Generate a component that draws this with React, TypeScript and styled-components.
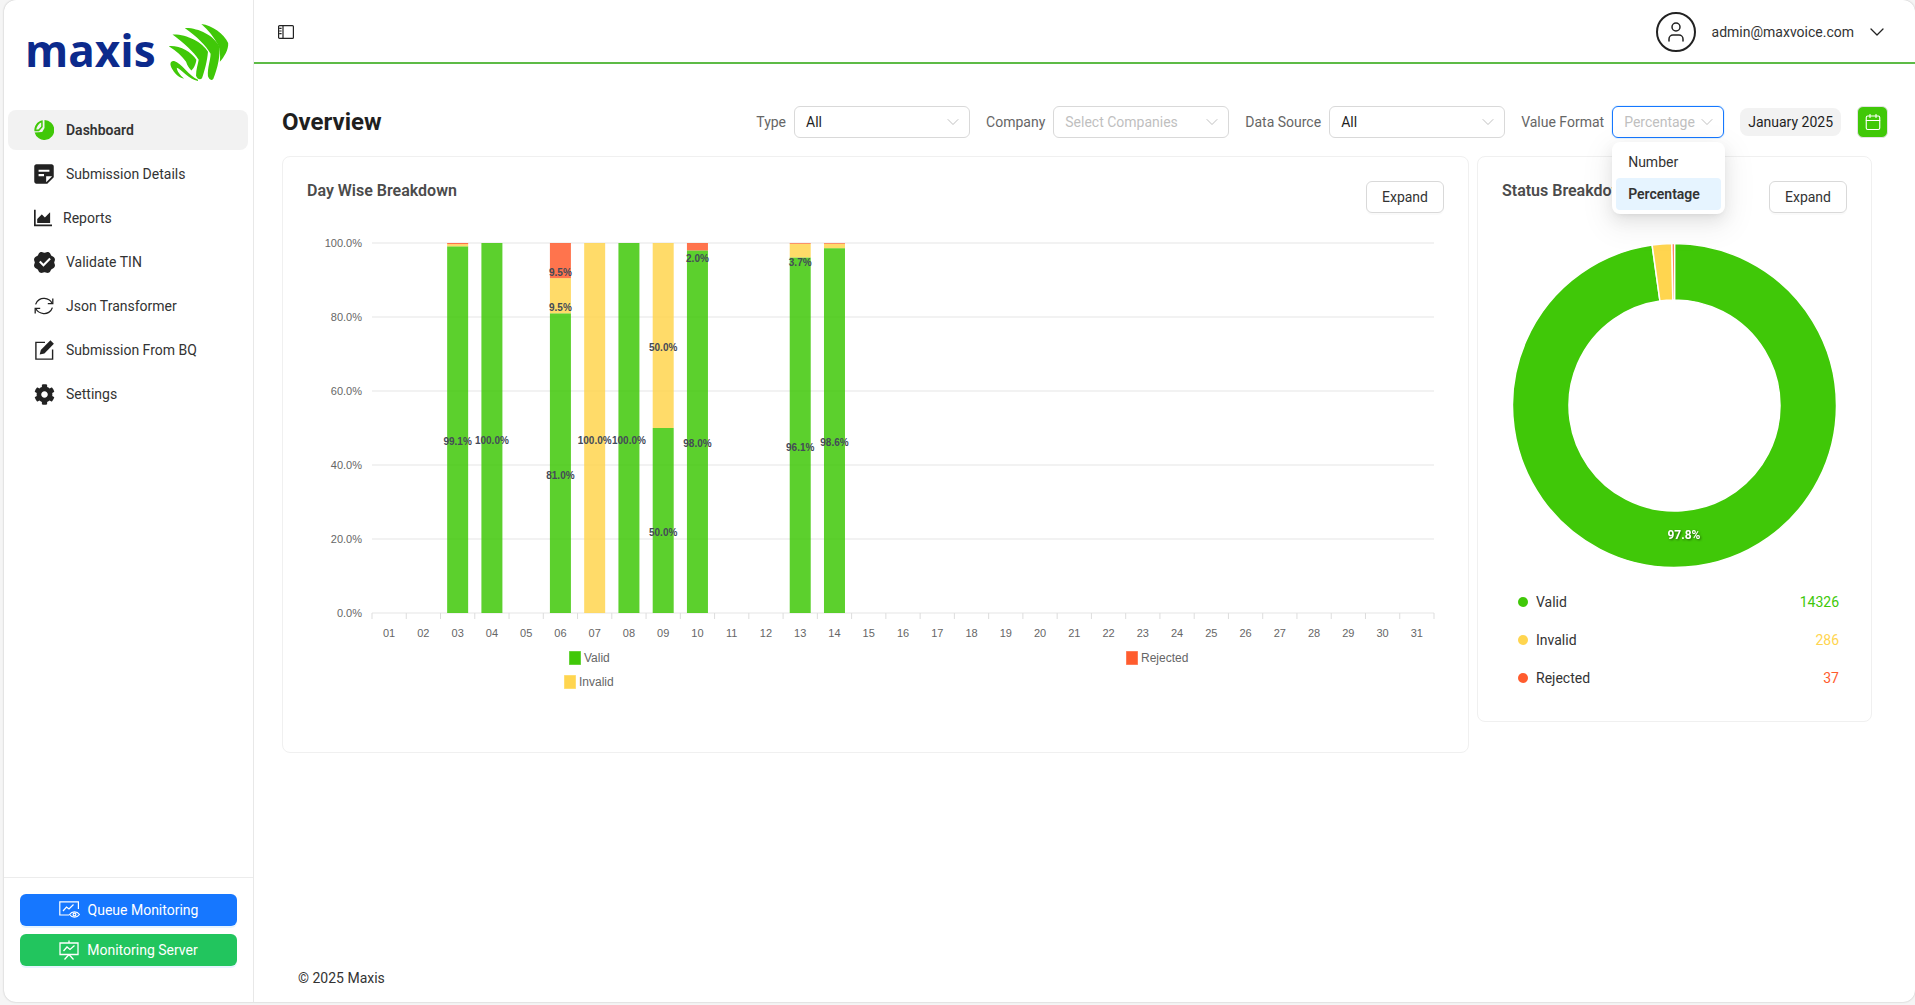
import { ReactNode } from "react";
import styled, { createGlobalStyle } from "styled-components";
import { Calendar, ChevronDown, User } from "lucide-react";
import { AiOutlineAreaChart } from "react-icons/ai";
import { FaCog } from "react-icons/fa";
import { MdStickyNote2 } from "react-icons/md";
import { RiVerifiedBadgeFill } from "react-icons/ri";

const GREEN = "#40c808";
const YELLOW = "#ffd54f";
const RED = "#ff5c2e";

const GlobalStyle = createGlobalStyle`
  html, body {
    margin: 0;
    height: 100%;
    background: #f5f5f5;
    font-family: Roboto, "Liberation Sans", sans-serif;
    font-size: 14px;
    overflow: hidden;
  }
  * {
    box-sizing: border-box;
  }
`;

const Shell = styled.div`
  display: flex;
  height: 1002px;
  margin-left: 4px;
  background: #fff;
  border-radius: 12px;
  box-shadow: 0 0 2px rgba(0, 0, 0, 0.25);
  overflow: hidden;
`;

const Sidebar = styled.aside`
  width: 250px;
  flex-shrink: 0;
  display: flex;
  flex-direction: column;
  border-right: 1px solid #e8e8e8;
`;

const LogoRow = styled.div`
  height: 110px;
  display: flex;
  align-items: flex-start;
  padding: 23px 0 0 21px;
`;

const LogoText = styled.span`
  width: 143px;
  font-family: "Open Sans", sans-serif;
  font-size: 44px;
  line-height: 54px;
  font-weight: 700;
  color: #0c2a8c;
`;

const Nav = styled.nav`
  flex: 1;
  display: flex;
  flex-direction: column;
  gap: 4px;
  padding: 0 5px 0 4px;
`;

const NavItem = styled.div<{ $active?: boolean }>`
  height: 40px;
  display: flex;
  align-items: center;
  gap: 12px;
  padding-left: 26px;
  border-radius: 8px;
  color: #333;
  font-weight: ${({ $active }) => ($active ? 600 : 400)};
  background: ${({ $active }) => ($active ? "#f2f2f2" : "transparent")};
`;

const NavIcon = styled.span<{ $shift?: number }>`
  width: 20px;
  height: 20px;
  display: flex;
  align-items: center;
  justify-content: center;
  margin-left: ${({ $shift = 0 }) => -$shift / 2}px;
  color: #222;

  svg {
    flex-shrink: 0;
  }
`;

const NavLabel = styled.span<{ $shift?: number }>`
  margin-left: ${({ $shift = 0 }) => -$shift / 2}px;
`;

const SideFooter = styled.div`
  display: flex;
  flex-direction: column;
  gap: 8px;
  padding: 16px 16px 36px;
  border-top: 1px solid #ececec;
`;

const SideButton = styled.button<{ $color: string; $glow: string }>`
  height: 32px;
  display: flex;
  align-items: center;
  justify-content: center;
  gap: 8px;
  border: 0;
  border-radius: 6px;
  color: #fff;
  font: inherit;
  background: ${({ $color }) => $color};
  box-shadow: 0 2px 0 ${({ $glow }) => $glow};
`;

const Main = styled.main`
  flex: 1;
  min-width: 0;
  display: flex;
  flex-direction: column;
`;

const Header = styled.header`
  height: 64px;
  flex-shrink: 0;
  display: flex;
  align-items: center;
  justify-content: space-between;
  padding: 2px 26px 0 23px;
  border-bottom: 2px solid #5dbb46;
`;

const UserBox = styled.div`
  display: flex;
  align-items: center;
  color: #333;
`;

const Avatar = styled.span`
  width: 40px;
  height: 40px;
  display: flex;
  align-items: center;
  justify-content: center;
  margin-right: 16px;
  border: 2px solid #222;
  border-radius: 50%;
`;

const Email = styled.span`
  margin-right: 11px;
`;

const Content = styled.div`
  flex: 1;
  display: flex;
  flex-direction: column;
  padding: 42px 27px 0 28px;
`;

const TitleRow = styled.div`
  display: flex;
  align-items: center;
  justify-content: space-between;
  margin-bottom: 18px;
`;

const PageTitle = styled.h1`
  margin: 0;
  font-size: 24px;
  font-weight: 700;
  color: #1f1f1f;
`;

const Filters = styled.div`
  display: flex;
  align-items: center;
  gap: 16px;
`;

const Filter = styled.label`
  display: flex;
  align-items: center;
  gap: 8px;
  color: #666;
`;

const SelectWrap = styled.div`
  position: relative;
`;

const SelectBox = styled.div<{ $width: number; $focused?: boolean; $muted?: boolean }>`
  width: ${({ $width }) => $width}px;
  height: 32px;
  display: flex;
  align-items: center;
  justify-content: space-between;
  padding: 0 6px 0 11px;
  border: 1px solid ${({ $focused }) => ($focused ? "#1677ff" : "#d9d9d9")};
  border-radius: 6px;
  color: ${({ $muted }) => ($muted ? "#bfbfbf" : "#1f1f1f")};
  background: #fff;
  box-shadow: ${({ $focused }) => ($focused ? "0 0 0 1px rgba(5, 145, 255, 0.1)" : "none")};
`;

const Menu = styled.div`
  position: absolute;
  z-index: 5;
  top: 36px;
  left: 0;
  width: 113px;
  padding: 4px;
  border-radius: 8px;
  background: #fff;
  box-shadow: 0 6px 16px rgba(0, 0, 0, 0.08), 0 3px 6px -4px rgba(0, 0, 0, 0.12),
    0 9px 28px 8px rgba(0, 0, 0, 0.05);
`;

const MenuItem = styled.div<{ $selected?: boolean }>`
  height: 32px;
  display: flex;
  align-items: center;
  padding: 0 8px 0 12px;
  border-radius: 4px;
  color: #333;
  font-weight: ${({ $selected }) => ($selected ? 600 : 400)};
  background: ${({ $selected }) => ($selected ? "#e6f4ff" : "transparent")};
`;

const MonthPill = styled.div`
  height: 28px;
  display: flex;
  align-items: center;
  padding: 0 8px;
  border-radius: 8px;
  color: #1f1f1f;
  background: #f2f2f2;
`;

const CalendarButton = styled.button`
  width: 31px;
  height: 32px;
  display: flex;
  align-items: center;
  justify-content: center;
  padding: 0;
  border: 1px solid #e3e3e3;
  border-radius: 6px;
  color: #fff;
  background: ${GREEN};
`;

const Cards = styled.div`
  display: flex;
  align-items: flex-start;
  gap: 8px;
`;

const Card = styled.section<{ $width: number }>`
  width: ${({ $width }) => $width}px;
  flex-shrink: 0;
  padding: 24px;
  border: 1px solid #f0f0f0;
  border-radius: 8px;
  background: #fff;
`;

const CardHead = styled.div`
  height: 32px;
  display: flex;
  align-items: flex-start;
  justify-content: space-between;
`;

const CardTitle = styled.h2`
  margin: 0;
  font-size: 16px;
  line-height: 20px;
  font-weight: 600;
  color: #4b4b4b;
`;

const ExpandButton = styled.button`
  width: 78px;
  height: 32px;
  padding: 0;
  border: 1px solid #d9d9d9;
  border-radius: 6px;
  color: #333;
  font: inherit;
  background: #fff;
  box-shadow: 0 2px 0 rgba(0, 0, 0, 0.02);
`;

const BarChart = styled.svg`
  display: block;
  margin-top: 12px;
`;

const Donut = styled.svg`
  display: block;
  margin: 27px 0 13px;
`;

const AxisText = styled.text`
  font-family: "Liberation Sans", sans-serif;
  font-size: 11px;
  fill: #666;
`;

const LegendText = styled.text`
  font-family: "Liberation Sans", sans-serif;
  font-size: 12px;
  fill: #666;
`;

const BarLabel = styled.text`
  font-family: "Liberation Sans", sans-serif;
  font-size: 10px;
  font-weight: 700;
  fill: #444a58;
  text-anchor: middle;
  dominant-baseline: central;
`;

const SliceLabel = styled.text`
  font-size: 12px;
  font-weight: 700;
  fill: #fff;
  text-anchor: middle;
  dominant-baseline: central;
  filter: drop-shadow(1px 1px 1px rgba(0, 0, 0, 0.5));
`;

const StatusRow = styled.div`
  height: 38px;
  display: flex;
  align-items: center;
  padding: 0 8px 0 16px;
  color: #333;
`;

const StatusDot = styled.span<{ $color: string }>`
  width: 10px;
  height: 10px;
  margin-right: 8px;
  border-radius: 50%;
  background: ${({ $color }) => $color};
`;

const StatusValue = styled.span<{ $color: string }>`
  margin-left: auto;
  color: ${({ $color }) => $color};
`;

const Footer = styled.footer`
  margin-top: auto;
  padding: 0 16px 16px;
  color: #333;
`;

// bottom of the plot is 613, top 243
const PLOT_LEFT = 372;
const PLOT_RIGHT = 1434;
const PLOT_TOP = 243;
const PLOT_BOTTOM = 613;
const STEP = (PLOT_RIGHT - PLOT_LEFT) / 31;
const BAR_WIDTH = 21;

type Day = {
  day: number;
  valid: number;
  invalid: number;
  rejected: number;
  labels: { text: string; y: number }[];
};

const days: Day[] = [
  { day: 3, valid: 99.1, invalid: 0.6, rejected: 0.3, labels: [{ text: "99.1%", y: 441 }] },
  { day: 4, valid: 100, invalid: 0, rejected: 0, labels: [{ text: "100.0%", y: 440 }] },
  {
    day: 6,
    valid: 81,
    invalid: 9.5,
    rejected: 9.5,
    labels: [
      { text: "81.0%", y: 475 },
      { text: "9.5%", y: 307 },
      { text: "9.5%", y: 272 },
    ],
  },
  { day: 7, valid: 0, invalid: 100, rejected: 0, labels: [{ text: "100.0%", y: 440 }] },
  { day: 8, valid: 100, invalid: 0, rejected: 0, labels: [{ text: "100.0%", y: 440 }] },
  {
    day: 9,
    valid: 50,
    invalid: 50,
    rejected: 0,
    labels: [
      { text: "50.0%", y: 532 },
      { text: "50.0%", y: 347 },
    ],
  },
  {
    day: 10,
    valid: 98,
    invalid: 0,
    rejected: 2,
    labels: [
      { text: "98.0%", y: 443 },
      { text: "2.0%", y: 258 },
    ],
  },
  {
    day: 13,
    valid: 96.1,
    invalid: 3.7,
    rejected: 0.2,
    labels: [
      { text: "96.1%", y: 447 },
      { text: "3.7%", y: 262 },
    ],
  },
  { day: 14, valid: 98.6, invalid: 1.2, rejected: 0.2, labels: [{ text: "98.6%", y: 442 }] },
];

const yTicks = [0, 20, 40, 60, 80, 100];

const toY = (pct: number) => PLOT_BOTTOM - (pct / 100) * (PLOT_BOTTOM - PLOT_TOP);

function Segment({ x, from, size, color }: { x: number; from: number; size: number; color: string }) {
  if (!size) return null;
  return (
    <rect
      x={x}
      y={toY(from + size)}
      width={BAR_WIDTH}
      height={toY(from) - toY(from + size)}
      fill={color}
      fillOpacity={0.85}
    />
  );
}

function LegendItem({ x, y, color, label }: { x: number; y: number; color: string; label: string }) {
  return (
    <>
      <rect x={x + 0.5} y={y - 5.5} width={11} height={13} fill={color} stroke={color} strokeOpacity={0.6} />
      <LegendText x={x + 15} y={y + 5}>
        {label}
      </LegendText>
    </>
  );
}

function DayChart() {
  return (
    <BarChart width={1137} height={503} viewBox="307 225 1137 503">
      {yTicks.map((tick) => (
        <g key={tick}>
          <line x1={PLOT_LEFT} x2={PLOT_RIGHT} y1={toY(tick)} y2={toY(tick)} stroke="#eeeeee" strokeWidth={1.6} />
          <AxisText x={362} y={toY(tick) + 4} textAnchor="end">
            {tick}.0%
          </AxisText>
        </g>
      ))}
      {Array.from({ length: 32 }, (_, i) => (
        <line
          key={i}
          x1={PLOT_LEFT + i * STEP}
          x2={PLOT_LEFT + i * STEP}
          y1={PLOT_BOTTOM}
          y2={PLOT_BOTTOM + 6}
          stroke="#dddddd"
        />
      ))}
      {Array.from({ length: 31 }, (_, i) => (
        <AxisText key={i} x={PLOT_LEFT + (i + 0.5) * STEP} y={637} textAnchor="middle">
          {String(i + 1).padStart(2, "0")}
        </AxisText>
      ))}
      {days.map(({ day, valid, invalid, rejected }) => {
        const x = PLOT_LEFT + (day - 0.5) * STEP - BAR_WIDTH / 2;
        return (
          <g key={day}>
            <Segment x={x} from={0} size={valid} color={GREEN} />
            <Segment x={x} from={valid} size={invalid} color={YELLOW} />
            <Segment x={x} from={valid + invalid} size={rejected} color={RED} />
          </g>
        );
      })}
      {days.map(({ day, labels }) =>
        labels.map(({ text, y }) => (
          <BarLabel key={`${day}-${y}`} x={PLOT_LEFT + (day - 0.5) * STEP} y={y}>
            {text}
          </BarLabel>
        )),
      )}
      <LegendItem x={569} y={657} color={GREEN} label="Valid" />
      <LegendItem x={564} y={681} color={YELLOW} label="Invalid" />
      <LegendItem x={1126} y={657} color={RED} label="Rejected" />
    </BarChart>
  );
}

const CX = 1674.5;
const CY = 405.5;
const OUTER = 162;
const INNER = 105.5;

function polar(r: number, deg: number) {
  const a = ((deg - 90) * Math.PI) / 180;
  return `${CX + r * Math.cos(a)} ${CY + r * Math.sin(a)}`;
}

function slicePath(start: number, end: number) {
  const large = end - start > 180 ? 1 : 0;
  return [
    `M${polar(OUTER, start)}`,
    `A${OUTER} ${OUTER} 0 ${large} 1 ${polar(OUTER, end)}`,
    `L${polar(INNER, end)}`,
    `A${INNER} ${INNER} 0 ${large} 0 ${polar(INNER, start)}`,
    "Z",
  ].join(" ");
}

const statuses = [
  { label: "Valid", value: 14326, color: GREEN },
  { label: "Invalid", value: 286, color: YELLOW },
  { label: "Rejected", value: 37, color: RED },
];

function StatusDonut() {
  const total = statuses.reduce((sum, s) => sum + s.value, 0);
  let angle = 0;
  return (
    <Donut width={345} height={330} viewBox="1502 240 345 330">
      {statuses.map(({ label, value, color }) => {
        const start = angle;
        angle += (value / total) * 360;
        return <path key={label} d={slicePath(start, angle)} fill={color} stroke="#fff" strokeWidth={1.5} />;
      })}
      <SliceLabel x={1684} y={534.5}>
        97.8%
      </SliceLabel>
    </Donut>
  );
}

function Swoosh() {
  return (
    <svg width={61} height={58} viewBox="22 15 183 175" fill="#40c808">
      <path d="M122 18 C155 22 190 48 203 75 C205 95 190 118 178 132 C180 110 178 92 172 80 C160 58 145 38 122 18 Z" />
      <path d="M72 30 C110 28 160 52 176 85 C180 110 172 150 158 184 C152 190 146 186 142 176 C140 150 150 128 150 108 C138 85 108 55 72 30 Z" />
      <path d="M35 50 C75 48 125 72 142 102 C140 130 132 160 124 182 C118 188 110 184 106 174 C106 155 112 140 114 126 C100 104 70 75 35 50 Z" />
      <path d="M24 85 C55 82 92 102 107 126 C106 138 100 152 92 158 C84 150 80 144 76 132 C64 115 48 100 24 85 Z" />
      <path d="M112 186 C85 176 62 136 40 130 C28 128 25 140 35 155 C45 172 58 180 70 183 C58 172 48 160 48 150 C60 152 85 186 112 190 Z" />
    </svg>
  );
}

function PieLeaf() {
  return (
    <svg width={20} height={20} viewBox="0 0 20 20">
      <path fill="#40c808" d="M10.5 0 A10 10 0 1 1 0.6 12.5 L8.2 12 L10.5 8 Z" />
      <path
        fill="#40c808"
        fillRule="evenodd"
        d="M8.7 0.3 L8.7 7 L5 11.2 L0.4 11.2 C0 6 3 1.5 8.7 0.3 Z M7.2 2.4 C4.8 3.6 2.8 6 2.2 9.6 L4.4 9.6 L7.2 6.4 Z"
      />
    </svg>
  );
}

function SyncArrows() {
  return (
    <svg width={20} height={20} viewBox="0 0 20 20" fill="none" stroke="currentColor" strokeWidth={1.3}>
      <path d="M1.6 8.4 C3 4 7 2 10.5 2.4 C14 2.8 16.5 4.4 18 7" />
      <path d="M18.8 2.4 V7.6 H13.8" />
      <path d="M18.4 11.6 C17 16 13 18 9.5 17.6 C6 17.2 3.5 15.6 2 13" />
      <path d="M1.2 17.6 V12.4 H6.2" />
    </svg>
  );
}

function EditSquare() {
  return (
    <svg width={20} height={20} viewBox="0 0 20 20">
      <path d="M11 2.4 H1.9 V19.1 H18.6 V9.4" fill="none" stroke="currentColor" strokeWidth={1.4} />
      <path fill="currentColor" d="M16.4 0.2 L19.9 3.7 L10.4 13.4 L5.7 14.5 L6.8 9.9 Z" />
    </svg>
  );
}

function PanelIcon() {
  return (
    <svg width={18} height={16} viewBox="0 0 18 16" fill="none" stroke="#222" strokeWidth={1.2}>
      <rect x={1.6} y={1.6} width={14.8} height={12.8} rx={1} />
      <path d="M6 1.6 V14.4 M2.2 4.4 H4.6 M2.2 7 H4.6 M2.2 9.6 H4.6" />
    </svg>
  );
}

function ChartEyeIcon() {
  return (
    <svg width={21} height={18} viewBox="0 0 21 18" fill="none" stroke="currentColor" strokeWidth={1.2}>
      <path d="M10 14 H0.8 V0.8 H19.4 V8" />
      <path d="M4 10 L7.5 6 L10 8 L14.5 3.5" />
      <path d="M10.5 13.5 C13 10 18 10 20.5 13.5 C18 17 13 17 10.5 13.5 Z" />
      <circle cx={15.5} cy={13.5} r={1.4} />
    </svg>
  );
}

function BoardChartIcon() {
  return (
    <svg width={20} height={20} viewBox="0 0 20 20" fill="none" stroke="currentColor" strokeWidth={1.3}>
      <path d="M10 0.5 V3 M1 3 H19 V14.5 H1 Z" />
      <path d="M4.5 11 L8 7 L11 9.5 L15.5 5.5" />
      <path d="M10 14.5 L5.5 19.5 M10 14.5 L14.5 19.5" />
    </svg>
  );
}

const navItems: { label: string; icon: ReactNode; active?: boolean; shift?: number }[] = [
  { label: "Dashboard", icon: <PieLeaf />, active: true },
  { label: "Submission Details", icon: <MdStickyNote2 size={26} /> },
  { label: "Reports", icon: <AiOutlineAreaChart size={24} />, shift: 3 },
  { label: "Validate TIN", icon: <RiVerifiedBadgeFill size={25} /> },
  { label: "Json Transformer", icon: <SyncArrows /> },
  { label: "Submission From BQ", icon: <EditSquare /> },
  { label: "Settings", icon: <FaCog size={21} /> },
];

function SelectField({
  value,
  width,
  muted,
  focused,
}: {
  value: string;
  width: number;
  muted?: boolean;
  focused?: boolean;
}) {
  return (
    <SelectBox $width={width} $muted={muted} $focused={focused}>
      {value}
      <ChevronDown size={20} strokeWidth={0.9} color="#aaa" />
    </SelectBox>
  );
}

export default function App() {
  return (
    <>
      <GlobalStyle />
      <Shell>
        <Sidebar>
          <LogoRow>
            <LogoText>maxis</LogoText>
            <Swoosh />
          </LogoRow>
          <Nav>
            {navItems.map(({ label, icon, active, shift }) => (
              <NavItem key={label} $active={active}>
                <NavIcon $shift={shift}>{icon}</NavIcon>
                <NavLabel $shift={shift}>{label}</NavLabel>
              </NavItem>
            ))}
          </Nav>
          <SideFooter>
            <SideButton $color="#1677ff" $glow="rgba(5, 145, 255, 0.1)">
              <ChartEyeIcon />
              Queue Monitoring
            </SideButton>
            <SideButton $color="#22c55e" $glow="rgba(5, 145, 255, 0.1)">
              <BoardChartIcon />
              Monitoring Server
            </SideButton>
          </SideFooter>
        </Sidebar>
        <Main>
          <Header>
            <PanelIcon />
            <UserBox>
              <Avatar>
                <User size={24} strokeWidth={1.5} color="#222" />
              </Avatar>
              <Email>admin@maxvoice.com</Email>
              <ChevronDown size={24} strokeWidth={1.3} color="#222" />
            </UserBox>
          </Header>
          <Content>
            <TitleRow>
              <PageTitle>Overview</PageTitle>
              <Filters>
                <Filter>
                  Type
                  <SelectField value="All" width={176} />
                </Filter>
                <Filter>
                  Company
                  <SelectField value="Select Companies" width={176} muted />
                </Filter>
                <Filter>
                  Data Source
                  <SelectField value="All" width={176} />
                </Filter>
                <Filter>
                  Value Format
                  <SelectWrap>
                    <SelectField value="Percentage" width={112} muted focused />
                    <Menu>
                      <MenuItem>Number</MenuItem>
                      <MenuItem $selected>Percentage</MenuItem>
                    </Menu>
                  </SelectWrap>
                </Filter>
                <MonthPill>January 2025</MonthPill>
                <CalendarButton>
                  <Calendar size={18} strokeWidth={1.5} />
                </CalendarButton>
              </Filters>
            </TitleRow>
            <Cards>
              <Card $width={1187}>
                <CardHead>
                  <CardTitle>Day Wise Breakdown</CardTitle>
                  <ExpandButton>Expand</ExpandButton>
                </CardHead>
                <DayChart />
              </Card>
              <Card $width={395}>
                <CardHead>
                  <CardTitle>Status Breakdown</CardTitle>
                  <ExpandButton>Expand</ExpandButton>
                </CardHead>
                <StatusDonut />
                {statuses.map(({ label, value, color }) => (
                  <StatusRow key={label}>
                    <StatusDot $color={color} />
                    {label}
                    <StatusValue $color={color}>{value}</StatusValue>
                  </StatusRow>
                ))}
              </Card>
            </Cards>
            <Footer>© 2025 Maxis</Footer>
          </Content>
        </Main>
      </Shell>
    </>
  );
}
